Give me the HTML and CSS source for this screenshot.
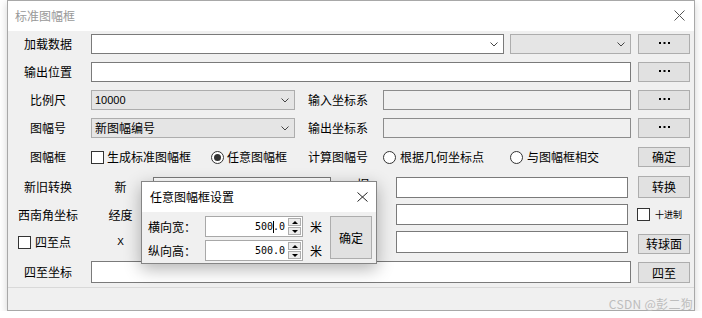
FILE: index.html
```html
<!DOCTYPE html>
<html lang="zh-CN">
<head>
<meta charset="utf-8">
<title>标准图幅框</title>
<link rel="stylesheet" href="styles.css">
</head>
<body>
<div class="window">
  <div class="titlebar">
    <span class="title">标准图幅框</span>
    <svg class="close" width="11" height="11" viewBox="0 0 11 11"><path d="M0.5 0.5L10.5 10.5M10.5 0.5L0.5 10.5" stroke="#555" stroke-width="1" fill="none"/></svg>
  </div>

  <div class="form">
    <div class="row">
      <div class="lbl">加载数据</div>
      <div class="field combo w-load ml3"><span></span><svg class="chev" width="8" height="5" viewBox="0 0 8 5"><path d="M0.5 0.5L4 4L7.5 0.5" stroke="#444" fill="none"/></svg></div>
      <div class="field combo dd w-type ml6"><span></span><svg class="chev" width="8" height="5" viewBox="0 0 8 5"><path d="M0.5 0.5L4 4L7.5 0.5" stroke="#444" fill="none"/></svg></div>
      <button class="btn"><svg class="dots" width="11" height="2" viewBox="0 0 11 2"><rect x="0" y="0" width="2" height="2" fill="#000"/><rect x="4.5" y="0" width="2" height="2" fill="#000"/><rect x="9" y="0" width="2" height="2" fill="#000"/></svg></button>
    </div>

    <div class="row">
      <div class="lbl">输出位置</div>
      <div class="field w-full ml3"></div>
      <button class="btn"><svg class="dots" width="11" height="2" viewBox="0 0 11 2"><rect x="0" y="0" width="2" height="2" fill="#000"/><rect x="4.5" y="0" width="2" height="2" fill="#000"/><rect x="9" y="0" width="2" height="2" fill="#000"/></svg></button>
    </div>

    <div class="row">
      <div class="lbl">比例尺</div>
      <div class="field combo dd w-half ml3"><span class="num">10000</span><svg class="chev" width="8" height="5" viewBox="0 0 8 5"><path d="M0.5 0.5L4 4L7.5 0.5" stroke="#444" fill="none"/></svg></div>
      <div class="lbl2">输入坐标系</div>
      <div class="field ro w-crs"></div>
      <button class="btn"><svg class="dots" width="11" height="2" viewBox="0 0 11 2"><rect x="0" y="0" width="2" height="2" fill="#000"/><rect x="4.5" y="0" width="2" height="2" fill="#000"/><rect x="9" y="0" width="2" height="2" fill="#000"/></svg></button>
    </div>

    <div class="row">
      <div class="lbl">图幅号</div>
      <div class="field combo dd w-half ml3"><span>新图幅编号</span><svg class="chev" width="8" height="5" viewBox="0 0 8 5"><path d="M0.5 0.5L4 4L7.5 0.5" stroke="#444" fill="none"/></svg></div>
      <div class="lbl2">输出坐标系</div>
      <div class="field ro w-crs"></div>
      <button class="btn"><svg class="dots" width="11" height="2" viewBox="0 0 11 2"><rect x="0" y="0" width="2" height="2" fill="#000"/><rect x="4.5" y="0" width="2" height="2" fill="#000"/><rect x="9" y="0" width="2" height="2" fill="#000"/></svg></button>
    </div>

    <div class="row mt9">
      <div class="lbl">图幅框</div>
      <label class="opt o1 ml3"><span class="cb"></span>生成标准图幅框</label>
      <label class="opt o2"><span class="rb on"></span>任意图幅框</label>
      <div class="lbl3">计算图幅号</div>
      <label class="opt o3 gap4"><span class="rb"></span>根据几何坐标点</label>
      <label class="opt o4 gap4"><span class="rb"></span>与图幅框相交</label>
      <button class="btn">确定</button>
    </div>

    <div class="row h22 mt9">
      <div class="lbl">新旧转换</div>
      <div class="sub ml3">新</div>
      <div class="field w-left ml3 h21 top1"></div>
      <div class="sub2 raised">旧</div>
      <div class="field w-right h21 top1"></div>
      <button class="btn h22">转换</button>
    </div>

    <div class="row h21 mt6">
      <div class="lbl">西南角坐标</div>
      <div class="sub ml3">经度</div>
      <div class="field w-left ml3 h21"></div>
      <div class="sub2"></div>
      <div class="field w-right h21"></div>
      <label class="decimal"><span class="cb"></span><span class="small">十进制</span></label>
    </div>

    <div class="row h22 mt6">
      <label class="lbl lbl-check"><span class="cb"></span>四至点</label>
      <div class="sub ml3 mono">X</div>
      <div class="field w-left ml3 h22"></div>
      <div class="sub2"></div>
      <div class="field w-right h22"></div>
      <button class="btn top3">转球面</button>
    </div>

    <div class="row h22 mt8">
      <div class="lbl">四至坐标</div>
      <div class="field w-full ml3 h22"></div>
      <button class="btn h21 top1">四至</button>
    </div>
  </div>

  <div class="status"></div>
  <div class="watermark">CSDN @彭二狗</div>

  <div class="dialog">
    <div class="dlg-title">
      <span>任意图幅框设置</span>
      <svg width="11" height="10" viewBox="0 0 11 10"><path d="M0.5 0.5L10.5 9.5M10.5 0.5L0.5 9.5" stroke="#222" stroke-width="1" fill="none"/></svg>
    </div>
    <div class="dlg-body">
      <div class="dlg-lbl">横向宽：</div>
      <div class="spin">
        <span class="val">500<i class="caret"></i>.0</span>
        <span class="spin-btns"><span class="sb up"></span><span class="sb down"></span></span>
      </div>
      <div class="unit">米</div>
      <button class="btn dlg-ok">确定</button>
      <div class="dlg-lbl">纵向高：</div>
      <div class="spin">
        <span class="val">500.0</span>
        <span class="spin-btns"><span class="sb up"></span><span class="sb down"></span></span>
      </div>
      <div class="unit">米</div>
    </div>
  </div>
</div>
</body>
</html>
```

FILE: styles.css
```css
* { box-sizing: border-box; }
html, body { margin: 0; padding: 0; background: #fff; }
body {
  font-family: "Noto Sans CJK SC", "Liberation Sans", sans-serif;
  font-size: 12px;
  line-height: 14px;
  color: #000;
}

.window {
  position: relative;
  margin-left: 7px;
  width: 688px;
  height: 311px;
  border: 1px solid #a8a8a8;
  background: #f0f0f0;
  display: flex;
  flex-direction: column;
  box-shadow: 0 3px 8px rgba(0, 0, 0, 0.18);
}

.titlebar {
  height: 30px;
  flex: none;
  background: #fff;
  display: flex;
  align-items: center;
  justify-content: space-between;
  padding: 0 9px 0 7px;
}
.title { color: #999; }
.close { margin-top: -2px; }

.form { padding-top: 3px; display: flex; flex-direction: column; flex: none; }

.row { display: flex; align-items: flex-start; height: 20px; flex: none; }
.row + .row { margin-top: 8px; }
.row.mt9 { margin-top: 9px; }
.row.mt6 { margin-top: 6px; }
.row.mt8 { margin-top: 8px; }
.h21 { height: 21px; }
.h22 { height: 22px; }
.top1 { margin-top: 1px; }
.top3 { margin-top: 3px; }
.ml3 { margin-left: 3px; }
.ml6 { margin-left: 6px; }

.lbl {
  width: 80px;
  height: 100%;
  flex: none;
  display: flex;
  align-items: center;
  justify-content: center;
}
.lbl-check { justify-content: flex-start; padding-left: 10px; gap: 4px; }

.lbl2 {
  width: 88px;
  height: 100%;
  flex: none;
  padding-left: 13px;
  display: flex;
  align-items: center;
}
.lbl3 {
  width: 75px;
  height: 100%;
  flex: none;
  display: flex;
  align-items: center;
}

.field {
  height: 20px;
  flex: none;
  border: 1px solid #7a7a7a;
  background: #fff;
}
.field.h21 { height: 21px; }
.field.h22 { height: 22px; }
.field.ro { background: #f0f0f0; border-color: #8c8c8c; }
.combo {
  display: flex;
  align-items: center;
  justify-content: space-between;
  padding: 0 5px 0 3px;
}
.combo.dd { background: #e5e5e5; border-color: #adadad; }
.num { font-family: "Liberation Sans", sans-serif; font-size: 11px; }
.chev { flex: none; }

.w-load { width: 413px; }
.w-type { width: 121px; }
.w-full { width: 540px; }
.w-half { width: 204px; }
.w-crs { width: 248px; }
.w-left { width: 178px; }
.w-right { width: 232px; }

.btn {
  margin-left: auto;
  margin-right: 4px;
  width: 52px;
  height: 20px;
  flex: none;
  padding: 0;
  font: inherit;
  color: #000;
  background: #e1e1e1;
  border: 1px solid #adadad;
  display: flex;
  align-items: center;
  justify-content: center;
}
.btn.h21 { height: 21px; }
.btn.h22 { height: 22px; }
.dots { margin-bottom: 3px; }

.opt { display: flex; align-items: center; gap: 3px; height: 100%; flex: none; }
.opt.gap4 { gap: 4px; }
.o1 { width: 120px; }
.o2 { width: 97px; }
.o3 { width: 127px; }
.o4 { width: 128px; }

.cb {
  width: 13px;
  height: 13px;
  flex: none;
  border: 1px solid #333;
  background: #fff;
}
.rb {
  width: 13px;
  height: 13px;
  flex: none;
  border: 1px solid #333;
  border-radius: 50%;
  background: #fff;
  display: flex;
  align-items: center;
  justify-content: center;
}
.rb.on::after {
  content: "";
  width: 7px;
  height: 7px;
  border-radius: 50%;
  background: #333;
}

.sub {
  width: 59px;
  height: 100%;
  flex: none;
  display: flex;
  align-items: center;
  justify-content: center;
}
.sub2 {
  width: 65px;
  height: 100%;
  flex: none;
  display: flex;
  align-items: center;
  justify-content: center;
}
.sub2.raised { align-items: flex-start; padding-top: 1px; }
.mono { font-family: "Liberation Mono", monospace; font-size: 11px; }

.decimal {
  margin-left: 9px;
  height: 100%;
  display: flex;
  align-items: center;
  gap: 5px;
}
.small { font-size: 9px; line-height: 10px; }

.status {
  flex: 1;
  margin-top: 4px;
  border-top: 1px solid #d9d9d9;
}

.watermark {
  position: absolute;
  right: 1px;
  bottom: -1px;
  font-size: 12px;
  color: #bdbdbd;
  letter-spacing: 0.3px;
}

.dialog {
  position: absolute;
  left: 133px;
  top: 180px;
  width: 236px;
  height: 83px;
  border: 1px solid #858585;
  background: #f0f0f0;
  box-shadow: 0 5px 16px rgba(0, 0, 0, 0.3);
  display: flex;
  flex-direction: column;
}
.dlg-title {
  height: 30px;
  flex: none;
  background: #fff;
  display: flex;
  align-items: center;
  justify-content: space-between;
  padding: 0 8px 0 8px;
}
.dlg-body {
  display: grid;
  grid-template-columns: 57px 98px 27px 42px;
  grid-template-rows: 21px 21px;
  row-gap: 3px;
  padding: 4px 0 0 6px;
}
.dlg-lbl { display: flex; align-items: center; }
.spin {
  display: flex;
  align-items: stretch;
  border: 1px solid #a8a8a8;
  background: #fff;
}
.val {
  flex: 1;
  display: flex;
  align-items: center;
  justify-content: flex-end;
  padding-right: 3px;
  font-family: "DejaVu Sans Mono", monospace;
  font-size: 10px;
}
.caret {
  display: inline-block;
  width: 1px;
  height: 12px;
  background: #000;
  margin-right: -1px;
}
.spin-btns {
  width: 13px;
  margin: 1px 1px 1px 0;
  display: flex;
  flex-direction: column;
  gap: 1px;
}
.sb {
  flex: 1;
  border: 1px solid #adadad;
  background: #ececec;
  display: flex;
  align-items: center;
  justify-content: center;
}
.sb.up::after {
  content: "";
  border-left: 3px solid transparent;
  border-right: 3px solid transparent;
  border-bottom: 3px solid #000;
}
.sb.down::after {
  content: "";
  border-left: 3px solid transparent;
  border-right: 3px solid transparent;
  border-top: 3px solid #000;
}
.unit { padding-left: 7px; display: flex; align-items: center; }
.dlg-ok {
  grid-column: 4;
  grid-row: 1 / 3;
  margin: 0;
  width: 42px;
  height: 43px;
}
```
